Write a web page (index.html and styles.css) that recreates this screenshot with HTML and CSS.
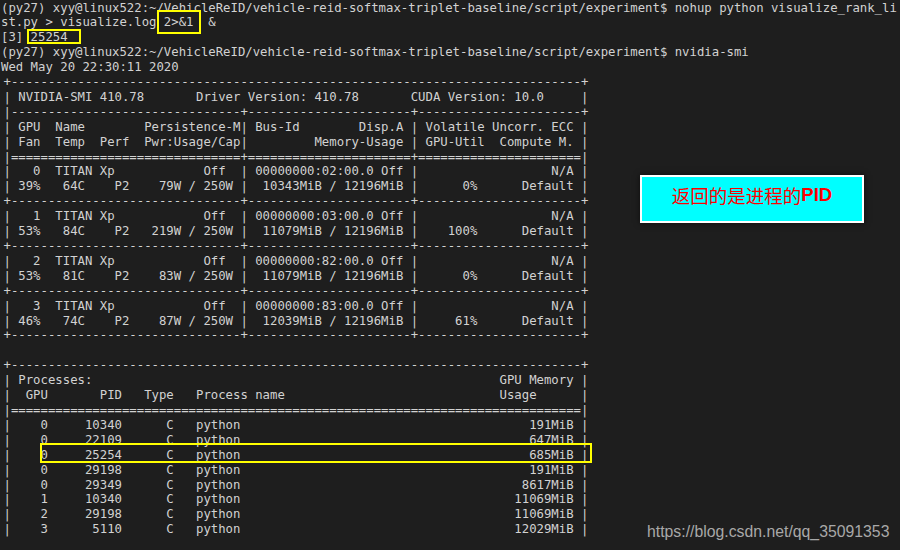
FILE: index.html
```html
<!DOCTYPE html>
<html lang="zh-CN">
<head>
<meta charset="utf-8">
<title>nvidia-smi</title>
<link rel="stylesheet" href="styles.css">
</head>
<body>
<div class="screen">
<pre class="term">(py27) xyy@linux522:~/VehicleReID/vehicle-reid-softmax-triplet-baseline/script/experiment$ nohup python visualize_rank_li
st.py &gt; visualize.log 2&gt;&amp;1  &amp;
[3] 25254
(py27) xyy@linux522:~/VehicleReID/vehicle-reid-softmax-triplet-baseline/script/experiment$ nvidia-smi
Wed May 20 22:30:11 2020
<span class="smi">+-----------------------------------------------------------------------------+
| NVIDIA-SMI 410.78       Driver Version: 410.78       CUDA Version: 10.0     |
|-------------------------------+----------------------+----------------------+
| GPU  Name        Persistence-M| Bus-Id        Disp.A | Volatile Uncorr. ECC |
| Fan  Temp  Perf  Pwr:Usage/Cap|         Memory-Usage | GPU-Util  Compute M. |
|===============================+======================+======================|
|   0  TITAN Xp            Off  | 00000000:02:00.0 Off |                  N/A |
| 39%   64C    P2    79W / 250W |  10343MiB / 12196MiB |      0%      Default |
+-------------------------------+----------------------+----------------------+
|   1  TITAN Xp            Off  | 00000000:03:00.0 Off |                  N/A |
| 53%   84C    P2   219W / 250W |  11079MiB / 12196MiB |    100%      Default |
+-------------------------------+----------------------+----------------------+
|   2  TITAN Xp            Off  | 00000000:82:00.0 Off |                  N/A |
| 53%   81C    P2    83W / 250W |  11079MiB / 12196MiB |      0%      Default |
+-------------------------------+----------------------+----------------------+
|   3  TITAN Xp            Off  | 00000000:83:00.0 Off |                  N/A |
| 46%   74C    P2    87W / 250W |  12039MiB / 12196MiB |     61%      Default |
+-------------------------------+----------------------+----------------------+

+-----------------------------------------------------------------------------+
| Processes:                                                       GPU Memory |
|  GPU       PID   Type   Process name                             Usage      |
|=============================================================================|
|    0     10340      C   python                                       191MiB |
|    0     22109      C   python                                       647MiB |
|    0     25254      C   python                                       685MiB |
|    0     29198      C   python                                       191MiB |
|    0     29349      C   python                                      8617MiB |
|    1     10340      C   python                                     11069MiB |
|    2     29198      C   python                                     11069MiB |
|    3      5110      C   python                                     12029MiB |</span></pre>
<div class="mark mark-redirect"></div>
<div class="mark mark-pid"></div>
<div class="mark mark-row"></div>
<div class="note">返回的是进程的<b>PID</b></div>
<div class="watermark">https://blog.csdn.net/qq_35091353</div>
</div>
</body>
</html>
```

FILE: styles.css
```css
html, body {
  margin: 0;
  padding: 0;
  background: #1e1e1e;
}

.screen {
  position: relative;
  width: 900px;
  height: 550px;
  overflow: hidden;
  background: #1e1e1e;
}

.term {
  margin: 0;
  padding: 0.5px 0 0 1px;
  font-family: "DejaVu Sans Mono", monospace;
  font-size: 12.3px;
  line-height: 14.91px;
  color: #d2d2d2;
  white-space: pre;
}

.smi {
  display: inline-block;
  padding-left: 2.5px;
}

.mark {
  position: absolute;
  border: 2px solid #ffff00;
}

.mark-redirect {
  left: 157px;
  top: 10px;
  width: 40px;
  height: 20px;
}

.mark-pid {
  left: 27px;
  top: 29px;
  width: 50px;
  height: 11px;
}

.mark-row {
  left: 40px;
  top: 443px;
  width: 548px;
  height: 16px;
}

.note {
  position: absolute;
  left: 640px;
  top: 175px;
  width: 220px;
  height: 35px;
  padding-bottom: 9px;
  box-sizing: content-box;
  background: #00ffff;
  border: 2px solid #ffffff;
  box-shadow: 0 0 6px rgba(0, 0, 0, 0.6);
  display: flex;
  align-items: center;
  justify-content: center;
  color: #ff0000;
  font-family: "Noto Sans CJK SC", sans-serif;
  font-size: 18.5px;
  line-height: 20px;
}

.note b {
  font-family: "Liberation Sans", Arial, sans-serif;
  font-weight: bold;
}

.watermark {
  position: absolute;
  left: 647px;
  top: 523px;
  font-family: "Liberation Sans", Arial, sans-serif;
  font-size: 15.8px;
  color: #a8a8a8;
  white-space: nowrap;
}
```
